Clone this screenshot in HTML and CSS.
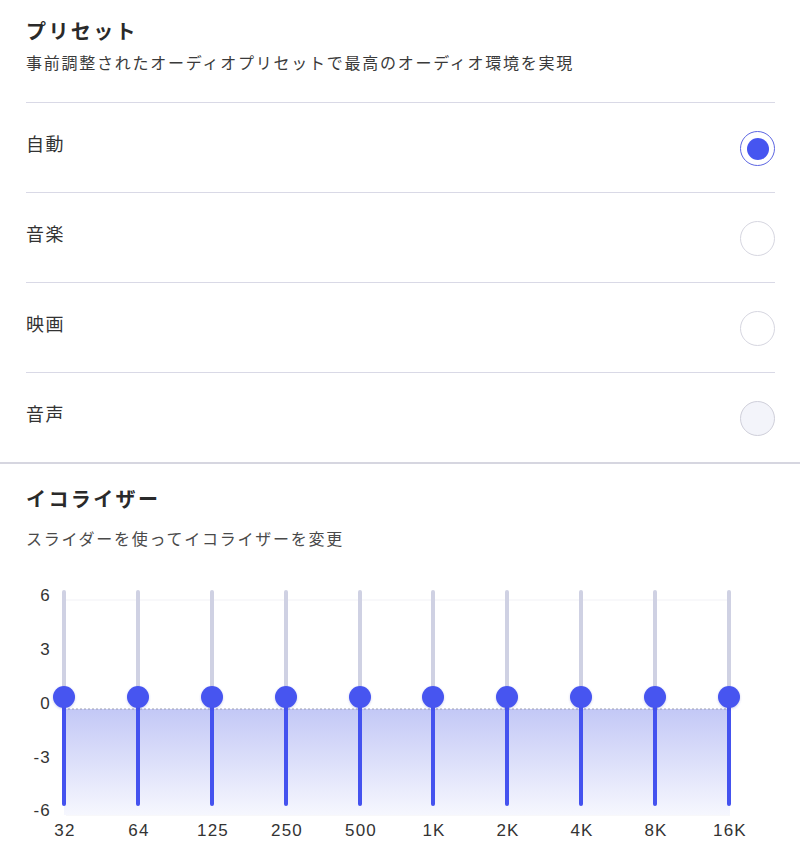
FILE: index.html
```html
<!DOCTYPE html>
<html lang="ja">
<head>
<meta charset="utf-8">
<title>プリセット</title>
<link rel="stylesheet" href="styles.css">
</head>
<body>
<section class="presets">
  <h2 class="title">プリセット</h2>
  <p class="subtitle">事前調整されたオーディオプリセットで最高のオーディオ環境を実現</p>
  <ul class="preset-list">
    <li class="preset-row"><span class="preset-label">自動</span><span class="radio radio-on"><span class="radio-dot"></span></span></li>
    <li class="preset-row"><span class="preset-label">音楽</span><span class="radio"></span></li>
    <li class="preset-row"><span class="preset-label">映画</span><span class="radio"></span></li>
    <li class="preset-row"><span class="preset-label">音声</span><span class="radio radio-hover"></span></li>
  </ul>
</section>
<section class="equalizer">
  <h2 class="title">イコライザー</h2>
  <p class="subtitle eq-sub">スライダーを使ってイコライザーを変更</p>
  <div class="chart">
    <svg class="chart-svg" width="800" height="272" viewBox="0 0 800 272">
      <defs>
        <linearGradient id="fillGrad" x1="0" y1="0" x2="0" y2="1">
          <stop offset="0" stop-color="#c3c8f6"/>
          <stop offset="1" stop-color="#f6f7fe"/>
        </linearGradient>
        <filter id="sh" x="-50%" y="-50%" width="200%" height="200%">
          <feDropShadow dx="0" dy="1" stdDeviation="1.2" flood-color="#3a44c0" flood-opacity="0.25"/>
        </filter>
      </defs>
      <line x1="66" y1="20" x2="730" y2="20" stroke="#f1f1f6" stroke-width="1"/>
      <line x1="66" y1="235" x2="730" y2="235" stroke="#f1f1f6" stroke-width="1"/>
      <rect x="64" y="129" width="666" height="106" fill="url(#fillGrad)"/>
      <line x1="64" y1="129" x2="730" y2="129" stroke="#9c9eb2" stroke-width="1" stroke-dasharray="2 2"/>
      <g class="axis-label" text-anchor="end">
        <text x="51" y="21">6</text>
        <text x="51" y="75">3</text>
        <text x="51" y="129">0</text>
        <text x="51" y="183">-3</text>
        <text x="51" y="236">-6</text>
      </g>
      <g id="sliders"></g>
      <g class="axis-label" text-anchor="middle">
        <text x="65" y="256">32</text>
        <text x="139" y="256">64</text>
        <text x="213" y="256">125</text>
        <text x="287" y="256">250</text>
        <text x="361" y="256">500</text>
        <text x="434" y="256">1K</text>
        <text x="508" y="256">2K</text>
        <text x="582" y="256">4K</text>
        <text x="656" y="256">8K</text>
        <text x="730" y="256">16K</text>
      </g>
    </svg>
  </div>
</section>
<script src="script.js"></script>
</body>
</html>
```
FILE: styles.css
```css
html, body {
  margin: 0;
  padding: 0;
  background: #ffffff;
}
body {
  width: 800px;
  font-family: "Noto Sans CJK JP", "Noto Sans", sans-serif;
  color: #333;
}
.presets {
  padding: 18px 25px 0 26px;
}
.title {
  margin: 0;
  font-size: 20px;
  line-height: 26px;
  letter-spacing: 2.4px;
  font-weight: 700;
  color: #2a2a2a;
}
.subtitle {
  margin: 7px 0 0;
  font-size: 16px;
  line-height: 22px;
  letter-spacing: 1.75px;
  color: #3a3a3a;
  white-space: nowrap;
}
.preset-list {
  list-style: none;
  margin: 29px 0 0;
  padding: 0;
}
.preset-row {
  display: flex;
  justify-content: space-between;
  align-items: flex-start;
  height: 89px;
  box-sizing: content-box;
  border-top: 1px solid #d9d9e6;
  padding: 0;
}
.preset-label {
  margin-top: 28px;
  font-size: 18px;
  line-height: 24px;
  letter-spacing: 1.5px;
  color: #333;
}
.radio {
  margin-top: 28px;
  width: 35px;
  height: 35px;
  box-sizing: border-box;
  border-radius: 50%;
  border: 1px solid #d6d6e0;
  background: #fff;
  display: flex;
  align-items: center;
  justify-content: center;
}
.radio-on {
  border-color: #5d66e2;
}
.radio-dot {
  width: 22px;
  height: 22px;
  border-radius: 50%;
  background: #4655f0;
}
.radio-hover {
  background: #f3f4fa;
  border-color: #cfcfda;
}
.equalizer {
  border-top: 2px solid #d6d6e0;
  padding: 22px 0 0;
}
.equalizer .title,
.equalizer .subtitle {
  padding-left: 26px;
}
.eq-sub {
  margin-top: 15px;
  color: #4a4a4a;
}
.chart {
  margin-top: 31px;
  height: 272px;
}
.chart-svg {
  display: block;
}
.axis-label {
  font-family: "Liberation Sans", Arial, sans-serif;
  font-size: 17px;
  letter-spacing: 1.2px;
  fill: #333;
}
```
FILE: script.js
```js
(function () {
  var xs = [64, 138, 212, 286, 360, 433, 507, 581, 655, 729];
  var ns = "http://www.w3.org/2000/svg";
  var g = document.getElementById("sliders");
  xs.forEach(function (x) {
    var top = document.createElementNS(ns, "line");
    top.setAttribute("x1", x); top.setAttribute("x2", x);
    top.setAttribute("y1", 12); top.setAttribute("y2", 117);
    top.setAttribute("stroke", "#cfd1e3"); top.setAttribute("stroke-width", 4);
    top.setAttribute("stroke-linecap", "round");
    g.appendChild(top);
    var bot = document.createElementNS(ns, "line");
    bot.setAttribute("x1", x); bot.setAttribute("x2", x);
    bot.setAttribute("y1", 117); bot.setAttribute("y2", 224);
    bot.setAttribute("stroke", "#4452ef"); bot.setAttribute("stroke-width", 4);
    bot.setAttribute("stroke-linecap", "round");
    g.appendChild(bot);
    var c = document.createElementNS(ns, "circle");
    c.setAttribute("cx", x); c.setAttribute("cy", 117); c.setAttribute("r", 11);
    c.setAttribute("fill", "#4655f0"); c.setAttribute("filter", "url(#sh)");
    g.appendChild(c);
  });
})();
```
